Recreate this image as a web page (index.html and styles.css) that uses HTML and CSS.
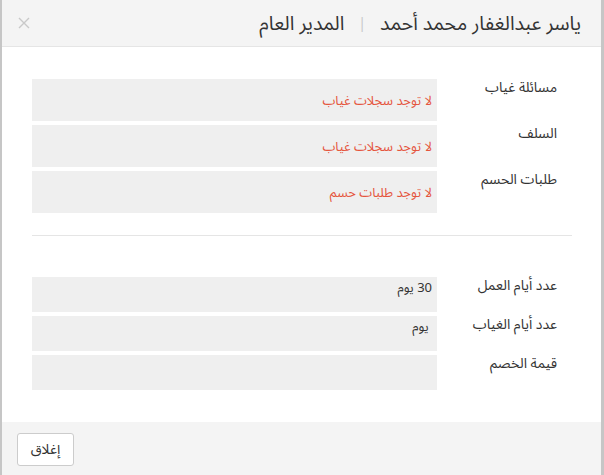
FILE: index.html
```html
<!DOCTYPE html>
<html lang="ar">
<head>
<meta charset="utf-8">
<title>Modal</title>
<link rel="stylesheet" href="styles.css">
</head>
<body>
<div class="screen">
  <div class="modal" dir="rtl">
    <div class="modal-header">
      <h4 class="title"><span>ياسر عبدالغفار محمد أحمد</span><span class="sep">|</span><span>المدير العام</span></h4>
      <button class="close" aria-label="close">
        <svg width="12" height="12" viewBox="0 0 12 12"><path d="M1 1L11 11M11 1L1 11" stroke="#c9c9c9" stroke-width="1.4" fill="none"/></svg>
      </button>
    </div>
    <div class="modal-body">
      <div class="group">
        <div class="row">
          <div class="label">مسائلة غياب</div>
          <div class="box box-tall"><span class="red">لا توجد سجلات غياب</span></div>
        </div>
        <div class="row">
          <div class="label">السلف</div>
          <div class="box box-tall"><span class="red">لا توجد سجلات غياب</span></div>
        </div>
        <div class="row">
          <div class="label">طلبات الحسم</div>
          <div class="box box-tall"><span class="red">لا توجد طلبات حسم</span></div>
        </div>
      </div>
      <hr class="divider">
      <div class="group">
        <div class="row">
          <div class="label">عدد أيام العمل</div>
          <div class="box box-short">30 يوم</div>
        </div>
        <div class="row">
          <div class="label">عدد أيام الغياب</div>
          <div class="box box-short">&nbsp;يوم</div>
        </div>
        <div class="row">
          <div class="label">قيمة الخصم</div>
          <div class="box box-short"></div>
        </div>
      </div>
    </div>
    <div class="modal-footer">
      <button class="btn">إغلاق</button>
    </div>
  </div>
</div>
</body>
</html>
```
FILE: styles.css
```css
html, body {
  margin: 0;
  padding: 0;
}
body {
  background: #c6c6c6;
  font-family: "Noto Sans Arabic", "DejaVu Sans", "Noto Sans", sans-serif;
  color: #333;
}
.screen {
  height: 475px;
  overflow: hidden;
  padding: 0 3px 0 2px;
}
.modal {
  background: #fff;
  min-height: 475px;
  display: flex;
  flex-direction: column;
}
.modal-header {
  flex-shrink: 0;
  height: 46px;
  background: #f4f4f4;
  border-bottom: 1px solid #e5e5e5;
  display: flex;
  align-items: center;
  padding: 0 20px 0 16px;
}
.title {
  margin: 0;
  font-weight: normal;
  font-size: 19.5px;
  color: #333;
  display: flex;
  align-items: center;
  white-space: nowrap;
}
.sep {
  color: #c8c8c8;
  font-size: 14px;
  margin: 0 14px;
}
.close {
  margin-right: auto;
  background: none;
  border: 0;
  padding: 0;
  width: 12px;
  height: 12px;
  display: flex;
}
.modal-body {
  flex-shrink: 0;
  padding: 32px 44px 32px 30px;
}
.group {
  display: flex;
  flex-direction: column;
  gap: 4px;
}
.row {
  display: grid;
  grid-template-columns: 120px 405px;
}
.label {
  font-size: 14px;
  line-height: 17px;
  text-align: right;
  color: #333;
}
.box {
  background: #efefef;
  font-size: 13px;
  color: #333;
  padding: 0 5px;
}
.box-tall {
  height: 42px;
  display: flex;
  align-items: center;
  padding-top: 2px;
  box-sizing: border-box;
}
.box-short {
  height: 35px;
  line-height: 23px;
  box-sizing: border-box;
}
.red {
  color: #e5553d;
}
.divider {
  border: 0;
  border-top: 1px solid #e5e5e5;
  margin: 22px -15px 41px 0;
}
.modal-footer {
  flex: 1 0 auto;
  background: #f4f4f4;
  padding: 11px 15px;
  display: flex;
  justify-content: flex-end;
  align-items: flex-start;
}
.btn {
  width: 57px;
  height: 33px;
  background: #fff;
  border: 1px solid #ccc;
  border-radius: 3px;
  font-family: inherit;
  font-size: 14px;
  color: #333;
  padding: 0;
}
```
